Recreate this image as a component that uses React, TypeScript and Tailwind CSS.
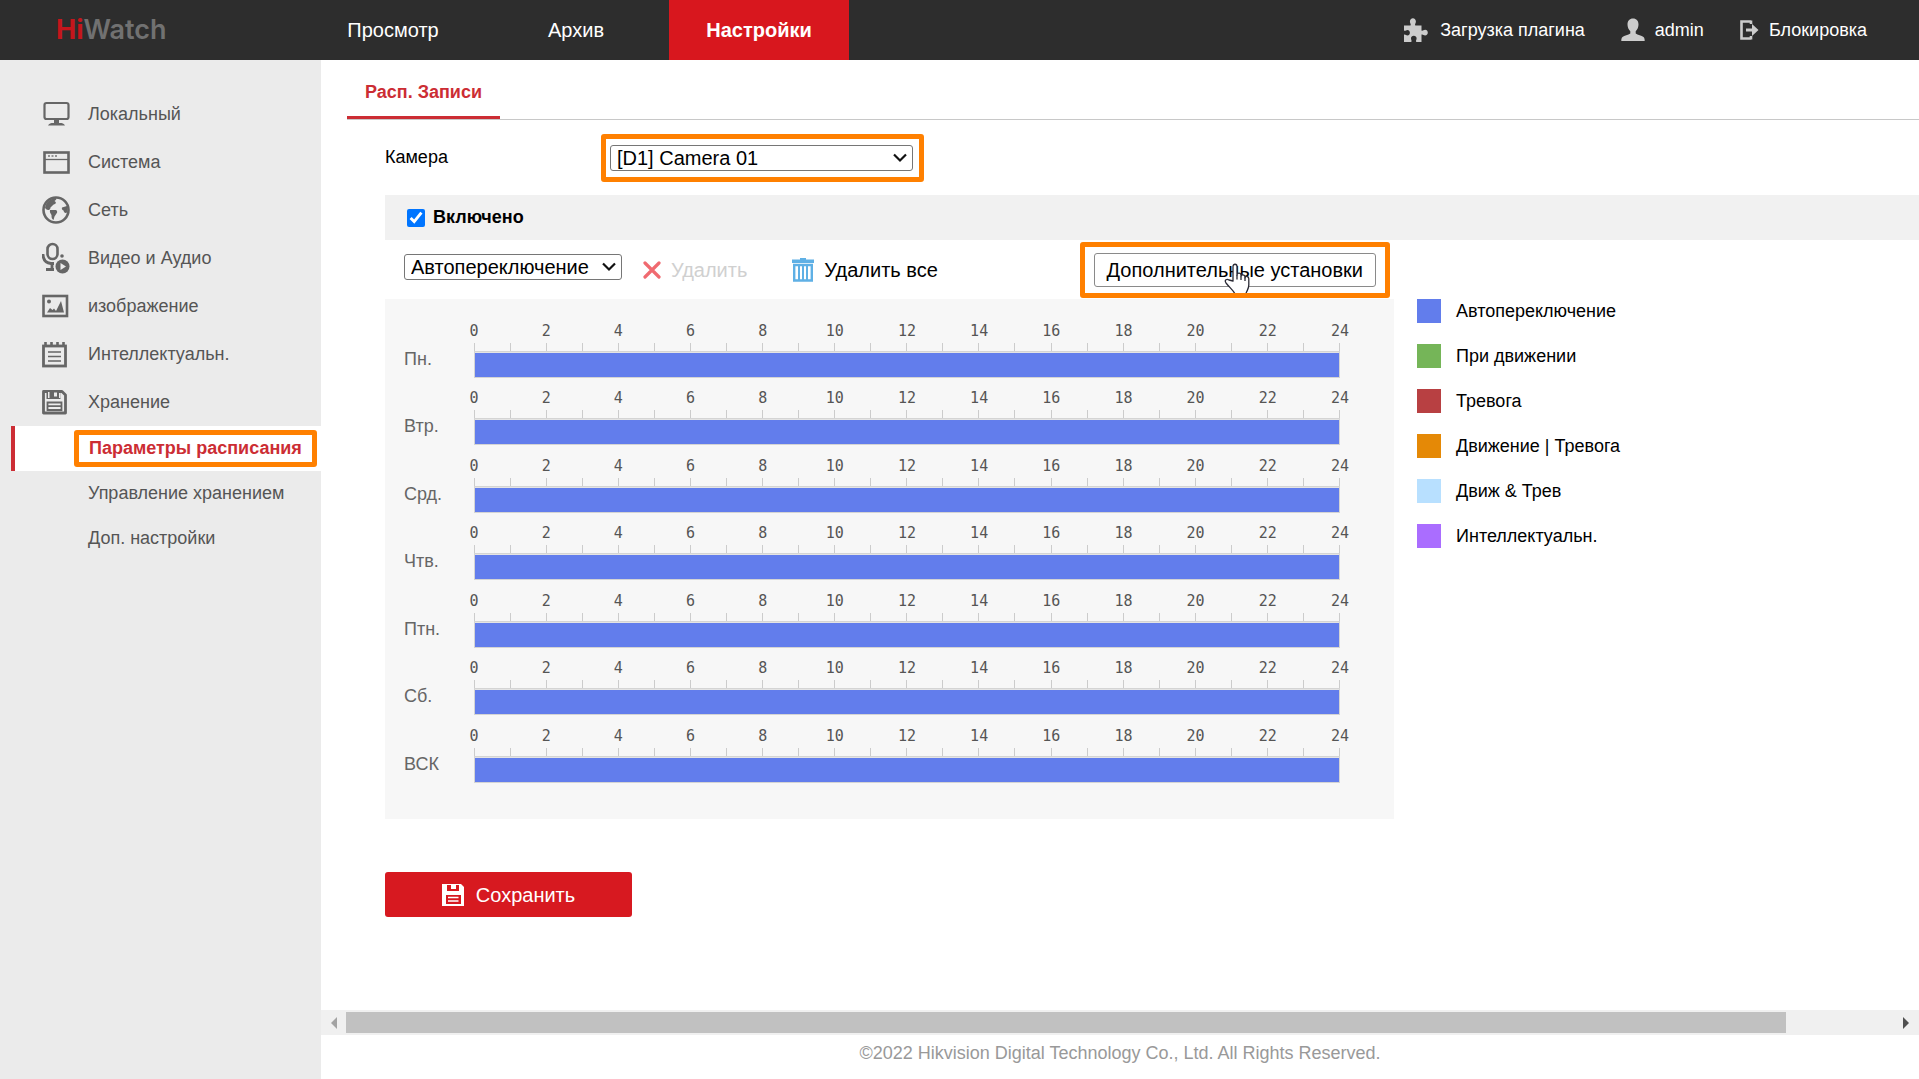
import React from "react";

const HOURS = [0, 2, 4, 6, 8, 10, 12, 14, 16, 18, 20, 22, 24];
const TICKS = Array.from({ length: 25 }, (_, i) => i);
const DAYS = ["Пн.", "Втр.", "Срд.", "Чтв.", "Птн.", "Сб.", "ВСК"];

const LEGEND = [
  { label: "Автопереключение", color: "bg-[#627dec]" },
  { label: "При движении", color: "bg-[#75b558]" },
  { label: "Тревога", color: "bg-[#b84042]" },
  { label: "Движение | Тревога", color: "bg-[#e58906]" },
  { label: "Движ & Трев", color: "bg-[#b8e0ff]" },
  { label: "Интеллектуальн.", color: "bg-[#aa6dff]" },
];

function MonitorIcon() {
  return (
    <svg width="28" height="28" viewBox="0 0 28 28" fill="none" aria-hidden="true">
      <rect x="2.5" y="3" width="24" height="16" rx="2" stroke="#666" strokeWidth="2.2" />
      <path d="M12 19.5h5v4h-5z M6 25.5c1-2 3-2.500 5-2.500h7c2 0 4 .5 5 2.500z" fill="#666" />
    </svg>
  );
}

function WindowIcon() {
  return (
    <svg width="28" height="28" viewBox="0 0 28 28" fill="none" aria-hidden="true">
      <rect x="2.500" y="4.500" width="24" height="20" stroke="#666" strokeWidth="2.600" />
      <path d="M3 11.500h23" stroke="#666" strokeWidth="1.300" />
      <path d="M6 8h2M9.500 8h2M13 8h2" stroke="#777" strokeWidth="1.600" />
    </svg>
  );
}

function GlobeIcon() {
  return (
    <svg width="28" height="28" viewBox="0 0 28 28" fill="none" aria-hidden="true">
      <circle cx="14" cy="14" r="12.500" stroke="#666" strokeWidth="2.600" />
      <path
        d="M3 12c1-6 5-9.500 11-10 1 1 0 2-1.500 3 1.500 1 2 2 .5 3-2 .5-3 2-4.500 3.500 0 2-1.500 2.500-2.500 2.500s-2-1-3-2zM8 14h6c1.500 1 1.500 2.500.5 3.500l-2 3-1 3.500c-2-1-2-3-2-5-1-1.500-2-3-1.500-5zM20 11.500l5-1.500c1 3 .5 5-.5 7-2 .5-2.500-1-3-2.500-1.500-.5-2-2-1.500-3z"
        fill="#666"
      />
    </svg>
  );
}

function MicIcon() {
  return (
    <svg width="28" height="32" viewBox="0 0 28 32" fill="none" aria-hidden="true">
      <rect x="5.500" y="2" width="10" height="15" rx="5" stroke="#666" strokeWidth="2.600" />
      <path d="M1 12c0 6 3 9 8 9.500h3M10 21v6M4 27.500h8" stroke="#666" strokeWidth="2.800" />
      <circle cx="20" cy="14" r="1.800" fill="#666" />
      <circle cx="20.500" cy="24.500" r="7" fill="#666" />
      <path d="M18.500 21l5.500 3.500-5.500 3.500z" fill="#ebebeb" />
    </svg>
  );
}

function PictureIcon() {
  return (
    <svg width="28" height="28" viewBox="0 0 28 28" fill="none" aria-hidden="true">
      <rect x="1.500" y="4" width="23.500" height="20" stroke="#666" strokeWidth="2.600" />
      <circle cx="7" cy="9.500" r="2" fill="#666" />
      <path d="M5 20.500l3-4.500 2.500 2 1.500-1.500 2 2.500 5-10 3 11.500z" fill="#666" />
    </svg>
  );
}

function NotepadIcon() {
  return (
    <svg width="28" height="28" viewBox="0 0 28 28" fill="none" aria-hidden="true">
      <rect x="1.500" y="6" width="22" height="20" stroke="#666" strokeWidth="2.800" />
      <path d="M3.500 2v4M9.500 2v4M15.500 2v4M21.500 2v4" stroke="#666" strokeWidth="2.600" />
      <path d="M6 12h13M6 16.500h13M6 21h13" stroke="#666" strokeWidth="1.500" />
    </svg>
  );
}

function DiskIcon() {
  return (
    <svg width="28" height="28" viewBox="0 0 28 28" fill="none" aria-hidden="true">
      <path d="M1.500 3.500h18.500l3.500 3.500v18h-22z" stroke="#666" strokeWidth="2.800" strokeLinejoin="round" />
      <path d="M4.500 3h14v8h-14z" fill="#666" />
      <path d="M12 4.500h3v4h-3z M6 4h1.500v6H6z M17 5h1.500v5H17z" fill="#ebebeb" />
      <path d="M5.500 14.500h14v7.500h-14z M6 18.200h13" stroke="#666" strokeWidth="1.800" />
    </svg>
  );
}

function PuzzleIcon() {
  return (
    <svg width="24" height="24" viewBox="0 0 24 24" fill="#ccc" aria-hidden="true">
      <path d="M0 7.500h6.500c.8-1.200-.6-2.300-.6-4C5.900 1.500 7.200.2 8.900.2s3 1.300 3 3.300c0 1.700-1.400 2.800-.6 4H17.500v5c1.200.8 2-.8 3.600-.8 1.700 0 2.700 1.200 2.700 2.800s-1 2.900-2.700 2.900c-1.600 0-2.400-1.600-3.600-.8V24h-5.200c-.8-1.200.3-2 .3-3.700 0-1.500-1.200-2.600-2.800-2.600s-2.800 1.100-2.800 2.600c0 1.700 1.100 2.500.3 3.700H0v-7.200c1.200-.8 2 .6 3.400.6 1.500 0 2.500-1.100 2.500-2.700s-1-2.800-2.500-2.800c-1.400 0-2.200 1.400-3.400.6z" />
    </svg>
  );
}

function PersonIcon() {
  return (
    <svg width="24" height="24" viewBox="0 0 24 24" fill="#ccc" aria-hidden="true">
      <path d="M12 .5c3.500 0 5.500 2.500 5.500 6 0 2.500-1 5-2.800 6.700v2.300c2 1.500 6 2 7.800 3.500 1 .9 1.200 2.300 1.200 4H.3c0-1.700.2-3.100 1.200-4 1.800-1.500 5.800-2 7.800-3.500v-2.300C7.500 11.500 6.500 9 6.500 6.500c0-3.500 2-6 5.500-6z" />
    </svg>
  );
}

function ExitIcon() {
  return (
    <svg width="19" height="22" viewBox="0 0 19 22" fill="none" aria-hidden="true">
      <path d="M11 2.500H1.500v17H11M11 1.500v3.500M11 17v3.500" stroke="#ccc" strokeWidth="2.600" />
      <path d="M6 9.500h6V5l6.500 6-6.500 6v-4.500H6z" fill="#ccc" />
    </svg>
  );
}

function TrashIcon() {
  return (
    <svg width="22" height="24" viewBox="0 0 22 24" fill="none" aria-hidden="true">
      <path d="M0 1.500h8V0h6v1.500h8V5H0z" fill="#5fb0e5" />
      <path d="M2.200 7h17.600v15.500H2.200z" stroke="#5fb0e5" strokeWidth="2.400" />
      <path d="M7 7v15M11 7v15M15 7v15" stroke="#5fb0e5" strokeWidth="2" />
    </svg>
  );
}

function SaveIcon() {
  return (
    <svg width="22" height="22" viewBox="0 0 22 22" fill="none" aria-hidden="true">
      <path d="M0 0h19l3 3v19H0z" fill="#fff" />
      <path d="M5 1v6h12V1h-3v4H9V1z M4 11h15v9H4z" fill="#d71920" />
      <path d="M6 13.500h10.500M6 17h10.500" stroke="#fff" strokeWidth="1.400" />
    </svg>
  );
}

function HandCursor() {
  return (
    <svg width="26" height="32" viewBox="0 0 26 32" fill="#fff" stroke="#2a2a35" strokeWidth="1.300" strokeLinejoin="round" aria-hidden="true">
      <path d="M9 18V3.500C9 .5 13 .5 13 3.500V12c0-2.500 4-2.500 4 0v1.500c0-2.500 4-2.200 4 .3v1c.5-2 3.800-1.800 3.800 1V22c0 4-2 5.500-3 9H11c-1.500-3.500-5-6-9-11-2-3 1-4.500 3-3z" />
      <path d="M13 12v4.500M17 13.500V17M21 14.500V18" />
    </svg>
  );
}

const MENU = [
  { label: "Локальный", icon: <MonitorIcon /> },
  { label: "Система", icon: <WindowIcon /> },
  { label: "Сеть", icon: <GlobeIcon /> },
  { label: "Видео и Аудио", icon: <MicIcon /> },
  { label: "изображение", icon: <PictureIcon /> },
  { label: "Интеллектуальн.", icon: <NotepadIcon /> },
  { label: "Хранение", icon: <DiskIcon /> },
];

function Select({ id, label, option, width }: { id: string; label?: string; option: string; width: string }) {
  return (
    <div className={`relative ${width}`}>
      <select
        id={id}
        aria-label={label}
        className="block h-[26px] w-full appearance-none rounded-[3px] border border-[#767676] bg-white pl-1.5 text-[20px] leading-6 text-black"
      >
        <option>{option}</option>
      </select>
      <svg className="pointer-events-none absolute top-2 right-1.5" width="14" height="10" viewBox="0 0 14 10" fill="none" aria-hidden="true">
        <path d="M1 1.500l6 6 6-6" stroke="#111" strokeWidth="2.200" />
      </svg>
    </div>
  );
}

function Header() {
  return (
    <header className="flex h-[60px] items-center bg-[#2d2d2d] text-white">
      <a href="#" className="w-[303px] shrink-0 pl-14 font-['Inter'] text-[27px] leading-8 font-semibold text-[#717171]">
        <span className="font-bold text-[#c4161c]">Hi</span>Watch
      </a>
      <nav className="flex h-full gap-[3px] text-[20px]">
        <a href="#" className="flex w-[180px] items-center justify-center">Просмотр</a>
        <a href="#" className="flex w-[180px] items-center justify-center">Архив</a>
        <a href="#" className="flex w-[180px] items-center justify-center bg-[#d8171e] font-bold">Настройки</a>
      </nav>
      <div className="ml-auto flex items-center gap-9 pr-[52px] text-[18px]">
        <a href="#" className="flex items-center gap-3">
          <PuzzleIcon />
          Загрузка плагина
        </a>
        <a href="#" className="flex items-center gap-2.5">
          <PersonIcon />
          admin
        </a>
        <a href="#" className="flex items-center gap-2.5">
          <ExitIcon />
          Блокировка
        </a>
      </div>
    </header>
  );
}

function Sidebar() {
  return (
    <aside className="w-[321px] shrink-0 bg-[#ebebeb] pt-[30px] text-[18px] text-[#555]">
      <nav>
        {MENU.map((m) => (
          <a key={m.label} href="#" className="flex h-12 items-center pl-[42px]">
            <span className="flex w-[46px] shrink-0">{m.icon}</span>
            {m.label}
          </a>
        ))}
        <a href="#" className="ml-[11px] flex h-[45px] items-center border-l-4 border-[#cc2d34] bg-white pl-[59px] font-bold text-[#cc2d34]">
          <span className="flex h-[37px] items-center rounded-[3px] border-5 border-[#ff8000] px-2.5 whitespace-nowrap">Параметры расписания</span>
        </a>
        <a href="#" className="flex h-[45px] items-center pl-[88px]">Управление хранением</a>
        <a href="#" className="flex h-[45px] items-center pl-[88px]">Доп. настройки</a>
      </nav>
    </aside>
  );
}

function DayRow({ day }: { day: string }) {
  return (
    <div className="flex">
      <div className="w-[70px] shrink-0 pt-6 text-[18px] leading-6 text-[#666]">{day}</div>
      <div className="w-[866px]">
        <div className="-mx-9 grid grid-cols-13 text-center font-['DejaVu_Sans_Mono',monospace] text-[15px] leading-4 text-[#555]">
          {HOURS.map((h) => (
            <span key={h}>{h}</span>
          ))}
        </div>
        <div className="flex justify-between pt-1">
          {TICKS.map((t) => (
            <span key={t} className="h-2 w-px bg-[#ccc]" />
          ))}
        </div>
        <div className="h-[27px] border border-[#d4d4d4] bg-[#e4e4e4] pt-px">
          <div className="h-6 bg-[#627dec]" />
        </div>
      </div>
    </div>
  );
}

function Schedule() {
  return (
    <section className="flex">
      <div className="grid h-[520px] w-[1009px] shrink-0 grid-rows-[repeat(7,minmax(0,1fr))] bg-[#f7f7f7] pt-[24px] pb-[24px] pl-[19px]">
        {DAYS.map((d) => (
          <DayRow key={d} day={d} />
        ))}
      </div>
      <ul className="flex flex-col gap-[21px] pl-[23px] text-[18px] text-black">
        {LEGEND.map((l) => (
          <li key={l.label} className="flex h-6 items-center gap-[15px]">
            <span className={`size-6 ${l.color}`} />
            {l.label}
          </li>
        ))}
      </ul>
    </section>
  );
}

export default function App() {
  return (
    <div className="flex min-h-screen flex-col bg-white font-['Liberation_Sans',Arial,sans-serif] text-black">
      <Header />
      <div className="flex grow">
        <Sidebar />
        <div className="flex min-w-0 grow flex-col">
          <main className="grow overflow-hidden">
            <div className="ml-[26px] flex h-[60px] border-b border-[#c8c8c8]">
              <a href="#" className="flex w-[153px] items-center justify-center border-b-3 border-[#cc2d34] pt-3 pb-1 text-[18px] font-bold text-[#cc2d34]">
                Расп. Записи
              </a>
            </div>
            <div className="ml-16">
              <div className="flex h-[75px] items-center">
                <label htmlFor="camera" className="w-[216px] text-[18px]">Камера</label>
                <div className="rounded-[3px] border-5 border-[#ff8000] py-1.5 pr-[6px] pl-1">
                  <Select id="camera" option="[D1] Camera 01" width="w-[303px]" />
                </div>
              </div>
              <label className="flex h-[45px] items-center gap-2 bg-[#f1f1f1] pl-[22px] text-[18px] font-bold">
                <input type="checkbox" defaultChecked className="size-[18px] accent-[#0075ff]" />
                Включено
              </label>
              <div className="flex h-[59px] items-center text-[20px]">
                <div className="pb-1.5 pl-[19px]">
                  <Select id="mode" label="Тип записи" option="Автопереключение" width="w-[218px]" />
                </div>
                <button type="button" disabled className="ml-[21px] flex items-center gap-2.5 text-[#d0d0d0]">
                  <svg width="18" height="18" viewBox="0 0 18 18" fill="none" aria-hidden="true">
                    <path d="M2 2l14 14M16 2L2 16" stroke="#f06a70" strokeWidth="3.200" strokeLinecap="round" />
                  </svg>
                  Удалить
                </button>
                <button type="button" className="ml-[45px] flex items-center gap-2.5">
                  <TrashIcon />
                  Удалить все
                </button>
                <div className="relative ml-[142px] overflow-hidden rounded-[3px] border-5 border-[#ff8000] px-[9px] py-1.5">
                  <button type="button" className="h-[34px] w-[282px] rounded-[3px] border border-[#8a8a8a] bg-white">
                    Дополнительные установки
                  </button>
                  <span className="absolute top-4 left-[139px]">
                    <HandCursor />
                  </span>
                </div>
              </div>
              <Schedule />
              <button type="button" className="mt-[53px] flex h-[45px] w-[247px] items-center justify-center gap-3 rounded-[3px] bg-[#d71920] text-[20px] text-white">
                <SaveIcon />
                Сохранить
              </button>
            </div>
          </main>
          <div className="flex h-[25px] items-center bg-[#f0f0f0]">
            <button type="button" aria-label="Прокрутить влево" className="flex w-[25px] justify-center">
              <svg width="7" height="12" viewBox="0 0 7 12" aria-hidden="true">
                <path d="M7 0v12L1 6z" fill="#a3a3a3" />
              </svg>
            </button>
            <div className="grow">
              <div className="h-[21px] w-[93%] bg-[#c1c1c1]" />
            </div>
            <button type="button" aria-label="Прокрутить вправо" className="flex w-[25px] justify-center">
              <svg width="7" height="12" viewBox="0 0 7 12" aria-hidden="true">
                <path d="M0 0v12l6-6z" fill="#505050" />
              </svg>
            </button>
          </div>
          <footer className="flex h-11 items-center justify-center pb-2 text-[18px] text-[#999]">
            ©2022 Hikvision Digital Technology Co., Ltd. All Rights Reserved.
          </footer>
        </div>
      </div>
    </div>
  );
}
